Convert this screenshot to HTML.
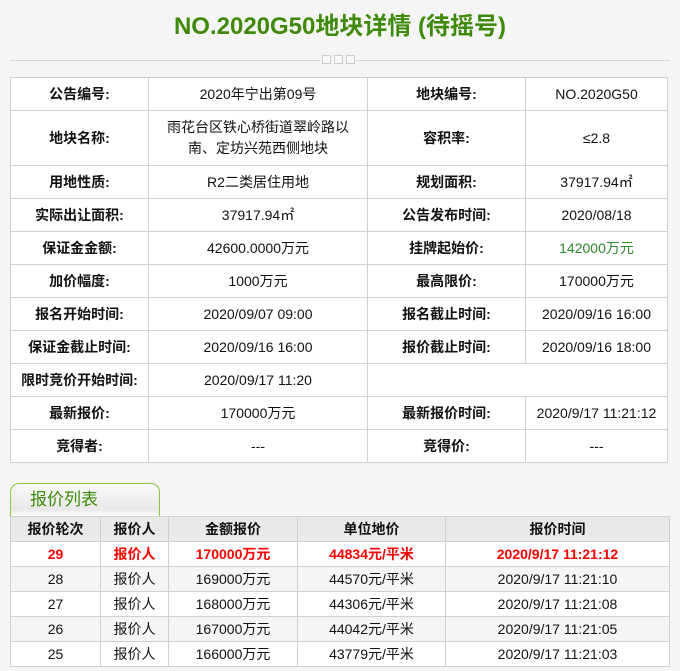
<!DOCTYPE html>
<html><head><meta charset="utf-8"><style>
*{margin:0;padding:0;box-sizing:border-box}
body{width:680px;height:671px;overflow:hidden;background:#f4f5f4;font-family:"Liberation Sans","Noto Sans CJK SC",sans-serif;color:#111;position:relative}
h1{position:absolute;top:11px;left:0;width:680px;text-align:center;font-size:24px;line-height:32px;color:#3f8a0a;font-weight:bold}
.line{position:absolute;top:60px;left:10px;width:660px;height:1px;background:#d5d5d5}
.sq{position:absolute;top:55px;left:320px;width:36px;height:11px;background:#f4f5f4;display:flex;gap:3px;justify-content:center}
.sq i{display:block;width:9px;height:9px;border:1px solid #ccc;background:#fafafa}
table{border-collapse:collapse;position:absolute;table-layout:fixed}
td,th{border:1px solid #d0d0d0;text-align:center;font-size:14px;line-height:18px;padding:0;vertical-align:middle}
#t1{left:10px;top:77px;width:657px;background:#fff}
#t1 td{height:33px}
#t1 td.l{font-weight:bold}
.tab{position:absolute;left:10px;top:483px;width:150px;height:33px;border:1px solid #8cc63f;border-bottom:none;border-radius:9px 9px 0 0;background:linear-gradient(#fafafa,#e8e8e8 80%,#fff);font-size:17px;line-height:22px;color:#3f8a0a;padding:5px 0 0 19px}
#t2{left:10px;top:516px;width:659px}
#t2 th{height:25px;background:#e9e9e9;font-weight:bold}
#t2 td{height:25px}
#t2 tr.r td{color:#f00;font-weight:bold;background:#fff}
#t2 tr.w td{background:#fff}
#t2 tr.g td{background:#f4f5f4}
</style></head><body>
<h1>NO.2020G50地块详情 (待摇号)</h1>
<div class="line"></div>
<div class="sq"><i></i><i></i><i></i></div>
<table id="t1">
<colgroup><col style="width:138px"><col style="width:219px"><col style="width:158px"><col style="width:142px"></colgroup>
<tr><td class="l">公告编号:</td><td>2020年宁出第09号</td><td class="l">地块编号:</td><td>NO.2020G50</td></tr>
<tr><td class="l" style="height:55px">地块名称:</td><td style="line-height:21px">雨花台区铁心桥街道翠岭路以<br>南、定坊兴苑西侧地块</td><td class="l">容积率:</td><td>≤2.8</td></tr>
<tr><td class="l">用地性质:</td><td>R2二类居住用地</td><td class="l">规划面积:</td><td>37917.94㎡</td></tr>
<tr><td class="l">实际出让面积:</td><td>37917.94㎡</td><td class="l">公告发布时间:</td><td>2020/08/18</td></tr>
<tr><td class="l">保证金金额:</td><td>42600.0000万元</td><td class="l">挂牌起始价:</td><td style="color:#2a8a2a">142000万元</td></tr>
<tr><td class="l">加价幅度:</td><td>1000万元</td><td class="l">最高限价:</td><td>170000万元</td></tr>
<tr><td class="l">报名开始时间:</td><td>2020/09/07 09:00</td><td class="l">报名截止时间:</td><td>2020/09/16 16:00</td></tr>
<tr><td class="l">保证金截止时间:</td><td>2020/09/16 16:00</td><td class="l">报价截止时间:</td><td>2020/09/16 18:00</td></tr>
<tr><td class="l">限时竞价开始时间:</td><td>2020/09/17 11:20</td><td colspan="2"></td></tr>
<tr><td class="l">最新报价:</td><td>170000万元</td><td class="l">最新报价时间:</td><td>2020/9/17 11:21:12</td></tr>
<tr><td class="l">竞得者:</td><td>---</td><td class="l">竞得价:</td><td>---</td></tr>
</table>
<div class="tab">报价列表</div>
<table id="t2">
<colgroup><col style="width:90px"><col style="width:68px"><col style="width:129px"><col style="width:148px"><col style="width:224px"></colgroup>
<tr><th>报价轮次</th><th>报价人</th><th>金额报价</th><th>单位地价</th><th>报价时间</th></tr>
<tr class="r"><td>29</td><td>报价人</td><td>170000万元</td><td>44834元/平米</td><td>2020/9/17 11:21:12</td></tr>
<tr class="g"><td>28</td><td>报价人</td><td>169000万元</td><td>44570元/平米</td><td>2020/9/17 11:21:10</td></tr>
<tr class="w"><td>27</td><td>报价人</td><td>168000万元</td><td>44306元/平米</td><td>2020/9/17 11:21:08</td></tr>
<tr class="g"><td>26</td><td>报价人</td><td>167000万元</td><td>44042元/平米</td><td>2020/9/17 11:21:05</td></tr>
<tr class="w"><td>25</td><td>报价人</td><td>166000万元</td><td>43779元/平米</td><td>2020/9/17 11:21:03</td></tr>
</table>
</body></html>
